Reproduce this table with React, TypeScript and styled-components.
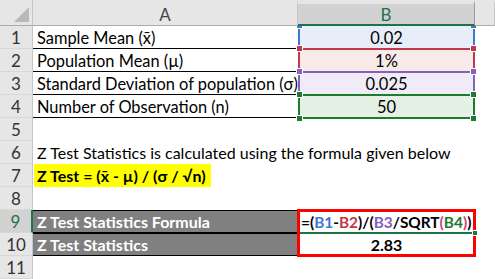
import styled, { createGlobalStyle } from "styled-components";

const GlobalStyle = createGlobalStyle`
  *, *::before, *::after { box-sizing: border-box; }
  html, body { margin: 0; padding: 0; background: #fff; }
  body { font-family: Lato, "Open Sans", sans-serif; }
`;

const Sheet = styled.div`
  display: grid;
  grid-template-columns: 33px 265px 177px 20px;
  grid-template-rows: 26px repeat(11, 23px);
  width: 495px;
  height: 279px;
  overflow: hidden;
  font-family: Lato, "Open Sans", sans-serif;
  font-size: 16px;
  color: #000;
`;

const Corner = styled.div`
  display: flex;
  justify-content: flex-end;
  align-items: flex-end;
  padding: 0 3px 3px 0;
  background: #e6e6e6;
  border-right: 1px solid #c6c6c6;
  border-bottom: 1px solid #ababab;
`;

const CornerMark = styled.div`
  width: 0;
  height: 0;
  border-left: 15px solid transparent;
  border-bottom: 15px solid #b9b9b9;
`;

const ColHeader = styled.div<{ $active?: boolean }>`
  position: relative;
  z-index: 2;
  display: flex;
  align-items: center;
  justify-content: center;
  font-size: 17px;
  background: ${(p) => (p.$active ? "#d2d2d2" : "#e6e6e6")};
  border-top: 4px solid #e6e6e6;
  border-right: 1px solid ${(p) => (p.$active ? "#9c9c9c" : "#c6c6c6")};
  border-bottom: ${(p) => (p.$active ? "2px solid #217346" : "1px solid #ababab")};
  color: ${(p) => (p.$active ? "#217346" : "#444")};
`;

const RowHeader = styled.div<{ $active?: boolean }>`
  display: flex;
  align-items: center;
  justify-content: center;
  font-size: 17px;
  background: ${(p) => (p.$active ? "#d2d2d2" : "#e6e6e6")};
  border-right: ${(p) => (p.$active ? "2px solid #217346" : "1px solid #c6c6c6")};
  border-bottom: 1px solid #d8d8d8;
  color: ${(p) => (p.$active ? "#217346" : "#333")};
`;

const Cell = styled.div<{ $ruled?: boolean; $dark?: boolean; $size?: number }>`
  display: flex;
  align-items: center;
  padding-left: 4px;
  white-space: nowrap;
  overflow: visible;
  font-size: ${(p) => p.$size ?? 16}px;
  background: ${(p) => (p.$dark ? "#808080" : "transparent")};
  color: ${(p) => (p.$dark ? "#fff" : "#000")};
  font-weight: ${(p) => (p.$dark ? 700 : 400)};
  border-top: ${(p) => (p.$dark ? "1px solid #000" : "none")};
  border-bottom: ${(p) => (p.$ruled || p.$dark ? "1px solid #000" : "none")};
`;

const Highlight = styled.span`
  display: flex;
  align-items: center;
  height: 100%;
  margin-left: -3px;
  padding: 0 5px 0 3px;
  background: #ffff00;
  font-size: 16px;
  font-weight: 700;
`;

const RefCell = styled.div<{ $color: string; $tint: string; $first?: boolean; $last?: boolean }>`
  position: relative;
  display: flex;
  align-items: center;
  justify-content: center;
  font-size: 16.5px;
  background: ${(p) => p.$tint};

  &::before {
    content: "";
    position: absolute;
    left: 0;
    right: 0;
    top: ${(p) => (p.$first ? "0" : "-1px")};
    bottom: ${(p) => (p.$last ? "-1px" : "0")};
    border: 2px solid ${(p) => p.$color};
    border-top-width: ${(p) => (p.$first ? 0 : 2)}px;
    border-bottom-width: ${(p) => (p.$last ? 2 : 0)}px;
    pointer-events: none;
  }
`;

const Handle = styled.span<{ $color: string; $x: "left" | "right"; $y: "top" | "bottom" }>`
  position: absolute;
  z-index: 1;
  width: 7px;
  height: 7px;
  background: ${(p) => p.$color};
  border: 1px solid #fff;
  ${(p) => (p.$x === "left" ? "left: -2px;" : "right: -2px;")}
  ${(p) => (p.$y === "top" ? "top: -4px;" : "bottom: -4px;")}
`;

const FormulaBox = styled.div`
  position: relative;
  grid-column: 3;
  grid-row: 10 / span 2;
  margin: -1px;
  display: grid;
  grid-template-rows: 22px 1fr;
  border: 3px solid #ff0000;
  font-weight: 700;
`;

const FormulaLine = styled.div`
  position: relative;
  display: flex;
  align-items: center;
  padding-left: 1px;
  font-size: 15.4px;
  white-space: nowrap;
  border-bottom: 2px solid #217346;
  margin-right: -3px;
`;

const FillHandle = styled.span`
  position: absolute;
  right: -2px;
  bottom: -4px;
  width: 6px;
  height: 6px;
  background: #217346;
  border: 1px solid #fff;
`;

const ResultLine = styled.div`
  display: flex;
  align-items: center;
  justify-content: center;
  font-size: 16px;
`;

const Ref = styled.span<{ $color: string }>`
  color: ${(p) => p.$color};
`;

const BLUE = "#3c78d0";
const RED = "#c0394b";
const PURPLE = "#8561bb";
const GREEN = "#1d7b30";
const PINK = "#d1407c";

const refs = [
  { label: "Sample Mean (x̄)", value: "0.02", color: BLUE, tint: "#e8eef9" },
  { label: "Population Mean (µ)", value: "1%", color: RED, tint: "#f9eaea" },
  { label: "Standard Deviation of population (σ)", value: "0.025", color: PURPLE, tint: "#f0ecf7" },
  { label: "Number of Observation (n)", value: "50", color: GREEN, tint: "#e5f1e5" },
];

export default function App() {
  return (
    <>
      <GlobalStyle />
      <Sheet>
        <Corner>
          <CornerMark />
        </Corner>
        <ColHeader>A</ColHeader>
        <ColHeader $active>B</ColHeader>
        <ColHeader />

        {refs.map((r, i) => (
          <>
            <RowHeader key={`h${i}`}>{i + 1}</RowHeader>
            <Cell key={`a${i}`} $ruled $size={16.4}>{r.label}</Cell>
            <RefCell
              key={`b${i}`}
              $color={r.color}
              $tint={r.tint}
              $first={i === 0}
              $last={i === refs.length - 1}
            >
              {r.value}
              <Handle $color={r.color} $x="left" $y="top" />
              <Handle $color={r.color} $x="right" $y="top" />
              {i === refs.length - 1 && (
                <>
                  <Handle $color={r.color} $x="left" $y="bottom" />
                  <Handle $color={r.color} $x="right" $y="bottom" />
                </>
              )}
            </RefCell>
            <Cell key={`c${i}`} />
          </>
        ))}

        <RowHeader>5</RowHeader>
        <Cell />
        <Cell />
        <Cell />

        <RowHeader>6</RowHeader>
        <Cell>Z Test Statistics is calculated using the formula given below</Cell>
        <Cell />
        <Cell />

        <RowHeader>7</RowHeader>
        <Cell>
          <Highlight>Z Test = (x̄ - µ) / (σ / √n)</Highlight>
        </Cell>
        <Cell />
        <Cell />

        <RowHeader>8</RowHeader>
        <Cell />
        <Cell />
        <Cell />

        <RowHeader $active>9</RowHeader>
        <Cell $dark>Z Test Statistics Formula</Cell>
        <FormulaBox>
          <FormulaLine>
            =(<Ref $color={BLUE}>B1</Ref>-<Ref $color={RED}>B2</Ref>)/(
            <Ref $color={PURPLE}>B3</Ref>/SQRT<Ref $color={PINK}>(</Ref>
            <Ref $color={GREEN}>B4</Ref>
            <Ref $color={PINK}>)</Ref>)
            <FillHandle />
          </FormulaLine>
          <ResultLine>2.83</ResultLine>
        </FormulaBox>
        <Cell style={{ gridRow: 10, gridColumn: 4 }} />

        <RowHeader>10</RowHeader>
        <Cell $dark>Z Test Statistics</Cell>
        <Cell style={{ gridRow: 11, gridColumn: 4 }} />

        <RowHeader>11</RowHeader>
        <Cell />
        <Cell />
        <Cell />
      </Sheet>
    </>
  );
}
